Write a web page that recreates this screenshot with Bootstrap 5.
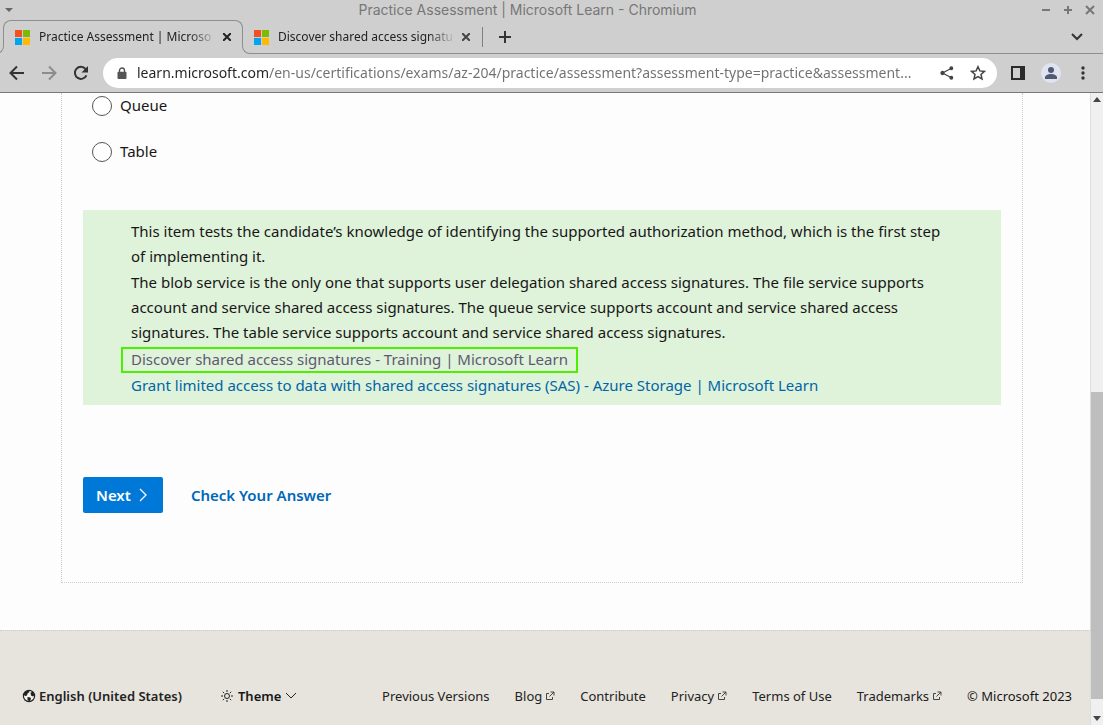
<!DOCTYPE html>
<html lang="en">
<head>
<meta charset="utf-8">
<meta name="viewport" content="width=device-width, initial-scale=1">
<title>Practice Assessment | Microsoft Learn</title>
<link rel="stylesheet" href="https://cdn.jsdelivr.net/npm/bootstrap@5.3.0/dist/css/bootstrap.min.css">
<style>
  body { font-family: "Noto Sans", "Open Sans", sans-serif; font-size: 15px; color: #171717; background: #fdfdfd; }
  svg { display: block; flex: none; }
  .plain { border: 0; background: none; padding: 0; color: inherit; line-height: 1; }
  a { text-decoration: none; }

  /* browser frame */
  .frame { background: #cfcfcf; border-bottom: 1px solid #777; }
  .titlebar { height: 20px; padding: 0 8px 0 4px; color: #777; font-family: Inter, "Open Sans", sans-serif; font-size: 14px; line-height: 20px; }
  .window-controls { gap: 12px; }
  .tabs { height: 34px; padding-left: 3px; }
  .active-tab { position: relative; width: 240px; padding: 0 11px 0 12px; }
  .active-tab::before { content: ""; position: absolute; inset: 0 0 8px 0; border: 1px solid #8a908c; border-bottom: 0; border-radius: 8px 8px 0 0; pointer-events: none; }
  .active-tab::after { content: ""; position: absolute; left: -7px; bottom: 0; width: 8px; height: 9px; border: solid #8a908c; border-width: 0 1px 1px 0; border-radius: 0 0 8px 0; }
  .tab-rest { position: relative; padding-left: 11px; padding-right: 20px; }
  .tab-rest::before { content: ""; position: absolute; left: -1px; right: 0; bottom: 0; height: 9px; border: solid #8a908c; border-width: 0 0 1px 1px; border-radius: 0 0 0 8px; pointer-events: none; }
  .tab-title { font-size: 12px; line-height: 20px; width: 176px; margin-left: 9px; margin-right: 8px; white-space: nowrap; text-align: left; color: #222;
    -webkit-mask-image: linear-gradient(to right, #000 150px, transparent 178px); mask-image: linear-gradient(to right, #000 150px, transparent 178px); }
  .second-tab { width: 228px; }
  .tab-divider { width: 1px; height: 20px; background: #808080; }
  .toolbar { height: 38px; padding: 0 14px 0 9px; color: #333; }
  .address { height: 30px; border-radius: 15px; background: #fff; padding: 0 11px 0 14px; margin-left: 14px; margin-right: 14px; }
  .address input { border: 0; outline: 0; padding: 0; margin-left: 10px; font-size: 14px; line-height: 20px; min-width: 0; text-overflow: ellipsis;
    background: linear-gradient(to right, #222 132px, #707070 132px); -webkit-background-clip: text; background-clip: text; color: transparent; }
  .avatar { width: 20px; height: 20px; border-radius: 50%; background: #dfe4f0; overflow: hidden; }

  /* page */
  .assessment { margin: 0 67px 0 61px; padding: 0 21px 69px; border: 1px dotted #ccc; border-top: 0; }
  .choice { padding-left: 9px; height: 26px; margin-bottom: 20px; gap: 8px; }
  .choice label { padding-bottom: 2px; }
  .choice input { appearance: none; width: 20px; height: 20px; border: 1px solid #555; border-radius: 50%; margin: 0; background: #fff; }
  .choice input:checked { border-width: 6px; }
  .feedback { background: #dff2da; margin-top: 45px; padding: 9px 48px 7px; line-height: 26px; }
  .feedback p { margin: 0 0 1px; line-height: 25px; }
  .feedback a { color: #0065a8; }
  .feedback a.visited-link { color: #5b5a70; outline: 2px solid #4df000; padding: 0 8px 2px; margin-left: -8px; display: inline-block; line-height: 20px; }
  .actions { margin-top: 72px; gap: 28px; font-weight: 600; font-size: 15px; }
  .next-btn { background: #0078d7; color: #fff; border: 0; border-radius: 2px; height: 36px; padding: 0 16px 0 13px; gap: 8px; font-weight: 600; }
  .actions a { color: #0067b8; }
  .site-footer { background: #e7e4dd; margin-top: 47px; border-top: 1px dotted #ccc; padding: 53px 18px 16px 22px; font-size: 13px; line-height: 24px; }
  .site-footer a { color: #222; display: inline-flex; align-items: center; gap: 3px; }
  .strong-item { font-weight: 600; }
  .foot-left { gap: 38px; }
  .foot-links { gap: 25px; }

  /* scroll bar */
  .scroller { width: 13px; flex: none; background: #f0f0f0; border-left: 1px solid #ddd; }
  .scroller .arrow { height: 13px; display: flex; align-items: center; justify-content: center; }
  .scroller .gap-above { flex: 286 0 0; }
  .scroller .thumb { flex: 306 0 0; background: #bebebe; }
  .scroller .gap-below { flex: 13 0 0; }
</style>
</head>
<body class="d-flex flex-column min-vh-100">
<header class="frame">
  <div class="titlebar d-flex align-items-center">
    <svg width="10" height="10" viewBox="0 0 10 10"><path d="M1 3h8L5 7z" fill="#666"/></svg>
    <span class="flex-grow-1 text-center">Practice Assessment | Microsoft Learn - Chromium</span>
    <div class="window-controls d-flex">
      <button class="plain" aria-label="Minimise"><svg width="10" height="10" viewBox="0 0 10 10" stroke="#777" stroke-width="2"><path d="M1 5h8"/></svg></button>
      <button class="plain" aria-label="Maximise"><svg width="10" height="10" viewBox="0 0 10 10" stroke="#777" stroke-width="2"><path d="M1 5h8M5 1v8"/></svg></button>
      <button class="plain" aria-label="Close window"><svg width="10" height="10" viewBox="0 0 10 10" stroke="#777" stroke-width="2"><path d="M1 1l8 8M9 1L1 9"/></svg></button>
    </div>
  </div>
  <div class="tabs d-flex">
    <div class="active-tab d-flex align-items-center">
      <svg width="15" height="15" viewBox="0 0 15 15"><path fill="#f25022" d="M0 0h7v7H0z"/><path fill="#7fba00" d="M8 0h7v7H8z"/><path fill="#00a4ef" d="M0 8h7v7H0z"/><path fill="#ffb900" d="M8 8h7v7H8z"/></svg>
      <button class="plain tab-title">Practice Assessment | Microso</button>
      <button class="plain" aria-label="Close tab"><svg width="8" height="8" viewBox="0 0 8 8" stroke="#222" stroke-width="2"><path d="M0 0l8 8M8 0L0 8"/></svg></button>
    </div>
    <div class="tab-rest flex-grow-1 d-flex align-items-center">
      <div class="second-tab d-flex align-items-center">
        <svg width="15" height="15" viewBox="0 0 15 15"><path fill="#f25022" d="M0 0h7v7H0z"/><path fill="#7fba00" d="M8 0h7v7H8z"/><path fill="#00a4ef" d="M0 8h7v7H0z"/><path fill="#ffb900" d="M8 8h7v7H8z"/></svg>
        <button class="plain tab-title">Discover shared access signatu</button>
        <button class="plain" aria-label="Close tab"><svg width="8" height="8" viewBox="0 0 8 8" stroke="#444" stroke-width="2"><path d="M0 0l8 8M8 0L0 8"/></svg></button>
      </div>
      <span class="tab-divider"></span>
      <button class="plain ms-3" aria-label="New tab"><svg width="12" height="12" viewBox="0 0 12 12" stroke="#333" stroke-width="2"><path d="M6 0v12M0 6h12"/></svg></button>
      <button class="plain ms-auto" aria-label="Search tabs"><svg width="12" height="8" viewBox="0 0 12 8" fill="none" stroke="#333" stroke-width="2"><path d="M1 1l5 5 5-5"/></svg></button>
    </div>
  </div>
  <div class="toolbar d-flex align-items-center">
    <button class="plain" aria-label="Back"><svg width="16" height="16" viewBox="0 0 16 16" fill="none" stroke="#333" stroke-width="2"><path d="M15 8H2M8 1.500L1.500 8 8 14.500"/></svg></button>
    <button class="plain ms-3" aria-label="Forward"><svg width="16" height="16" viewBox="0 0 16 16" fill="none" stroke="#8c8c8c" stroke-width="2"><path d="M1 8h13M8 1.500L14.500 8 8 14.500"/></svg></button>
    <button class="plain ms-3" aria-label="Reload"><svg width="16" height="16" viewBox="0 0 16 16"><path d="M13.400 10.300A6 6 0 1 1 12.500 4" fill="none" stroke="#333" stroke-width="2"/><path d="M15 1v6.500H8.500z" fill="#333"/></svg></button>
    <div class="address flex-grow-1 d-flex align-items-center">
      <svg width="10" height="13" viewBox="0 0 10 13"><path d="M2.500 6V3.500a2.500 2.500 0 0 1 5 0V6" fill="none" stroke="#555" stroke-width="1.400"/><rect x="0.500" y="4.800" width="9" height="7.200" rx="1" fill="#555"/></svg>
      <input class="flex-grow-1" type="text" aria-label="Address" value="learn.microsoft.com/en-us/certifications/exams/az-204/practice/assessment?assessment-type=practice&amp;assessment...">
      <button class="plain ms-1" aria-label="Share"><svg width="14" height="14" viewBox="0 0 14 14" stroke="#444" stroke-width="1.300"><path d="M2.500 7l8.500-4.500M2.500 7l8.500 4.500" fill="none"/><circle cx="2.500" cy="7" r="1.500" fill="#444"/><circle cx="11.300" cy="2.300" r="1.300" fill="#444"/><circle cx="11.300" cy="11.700" r="1.300" fill="#444"/></svg></button>
      <button class="plain ms-3" aria-label="Bookmark"><svg width="16" height="16" viewBox="0 0 16 16"><path d="M8 1.700l1.900 4.200 4.500.500-3.400 3 1 4.500L8 11.600l-4 2.300 1-4.500-3.400-3 4.500-.500z" fill="none" stroke="#444" stroke-width="1.500"/></svg></button>
    </div>
    <button class="plain" aria-label="Side panel"><svg width="14" height="14" viewBox="0 0 14 14"><path d="M1 1h12v12H1z" fill="none" stroke="#2b2b2b" stroke-width="2"/><path d="M9 1h4v12H9z" fill="#2b2b2b"/></svg></button>
    <button class="plain avatar ms-3" aria-label="Profile"><svg width="20" height="20" viewBox="0 0 20 20" fill="#515a75"><circle cx="10" cy="7" r="3"/><path d="M4 16v-1.500c0-2.300 3-3.500 6-3.500s6 1.200 6 3.500V16z"/></svg></button>
    <button class="plain ms-auto ps-3" aria-label="Menu"><svg width="12" height="14" viewBox="0 0 12 14" fill="#333"><circle cx="6" cy="2" r="1.700"/><circle cx="6" cy="7" r="1.700"/><circle cx="6" cy="12" r="1.700"/></svg></button>
  </div>
</header>

<div class="d-flex flex-grow-1">
  <div class="flex-grow-1 d-flex flex-column">
    <main class="assessment">
      <div class="choice d-flex align-items-center"><input type="radio" name="service" id="queue"><label for="queue">Queue</label></div>
      <div class="choice d-flex align-items-center"><input type="radio" name="service" id="table"><label for="table">Table</label></div>
      <section class="feedback">
        <p>This item tests the candidate’s knowledge of identifying the supported authorization method, which is the first step of implementing it.</p>
        <p>The blob service is the only one that supports user delegation shared access signatures. The file service supports account and service shared access signatures. The queue service supports account and service shared access signatures. The table service supports account and service shared access signatures.</p>
        <div><a href="#" class="visited-link">Discover shared access signatures - Training | Microsoft Learn</a></div>
        <div><a href="#">Grant limited access to data with shared access signatures (SAS) - Azure Storage | Microsoft Learn</a></div>
      </section>
      <div class="actions d-flex align-items-center">
        <button class="next-btn d-flex align-items-center">Next <svg width="8" height="14" viewBox="0 0 8 14" fill="none" stroke="#fff" stroke-width="1.300"><path d="M1 1l6 6-6 6"/></svg></button>
        <a href="#">Check Your Answer</a>
      </div>
    </main>
    <footer class="site-footer flex-grow-1 d-flex align-items-start justify-content-between">
      <div class="d-flex strong-item foot-left">
        <a href="#"><svg width="14" height="14" viewBox="0 0 14 14"><circle cx="7" cy="7" r="5.600" fill="#f4f2ee" stroke="#222" stroke-width="1.200"/><path d="M1.500 5.500L3.500 2.500 7 1.500 7.500 3 5.500 4.500 5 6.500 3 7zM8.500 3.500L11 2.800 12.500 6 11 7.500 9 6.500zM5.500 8L8.500 8.500 9 10 7.500 12.500 5.500 11z" fill="#222"/></svg>English (United States)</a>
        <button class="plain d-flex align-items-center strong-item"><svg width="14" height="14" viewBox="0 0 14 14" fill="none" stroke="#222"><circle cx="7" cy="7" r="2.500"/><path d="M7 1v2M7 11v2M1 7h2M11 7h2M2.800 2.800l1.400 1.400M9.800 9.800l1.400 1.400M2.800 11.200l1.400-1.400M9.800 4.200l1.400-1.400"/></svg><span class="mx-1">Theme</span><svg width="12" height="8" viewBox="0 0 12 8" fill="none" stroke="#222"><path d="M1 1l5 5 5-5"/></svg></button>
      </div>
      <nav class="d-flex foot-links" aria-label="Footer">
        <a href="#">Previous Versions</a>
        <a href="#">Blog<svg width="10" height="10" viewBox="0 0 10 10" fill="none" stroke="#444"><path d="M4 2.500H1.500v6h6V6M5.500 1h3.500v3.500M9 1L4.500 5.500"/></svg></a>
        <a href="#">Contribute</a>
        <a href="#">Privacy<svg width="10" height="10" viewBox="0 0 10 10" fill="none" stroke="#444"><path d="M4 2.500H1.500v6h6V6M5.500 1h3.500v3.500M9 1L4.500 5.500"/></svg></a>
        <a href="#">Terms of Use</a>
        <a href="#">Trademarks<svg width="10" height="10" viewBox="0 0 10 10" fill="none" stroke="#444"><path d="M4 2.500H1.500v6h6V6M5.500 1h3.500v3.500M9 1L4.500 5.500"/></svg></a>
        <span>© Microsoft 2023</span>
      </nav>
    </footer>
  </div>
  <div class="scroller d-flex flex-column" aria-hidden="true">
    <span class="arrow"><svg width="8" height="5" viewBox="0 0 8 5"><path d="M4 0l4 5H0z" fill="#444"/></svg></span>
    <span class="gap-above"></span><span class="thumb"></span><span class="gap-below"></span>
    <span class="arrow"><svg width="8" height="5" viewBox="0 0 8 5"><path d="M0 0h8L4 5z" fill="#444"/></svg></span>
  </div>
</div>
<script src="https://cdn.jsdelivr.net/npm/bootstrap@5.3.0/dist/js/bootstrap.bundle.min.js"></script>
</body>
</html>
